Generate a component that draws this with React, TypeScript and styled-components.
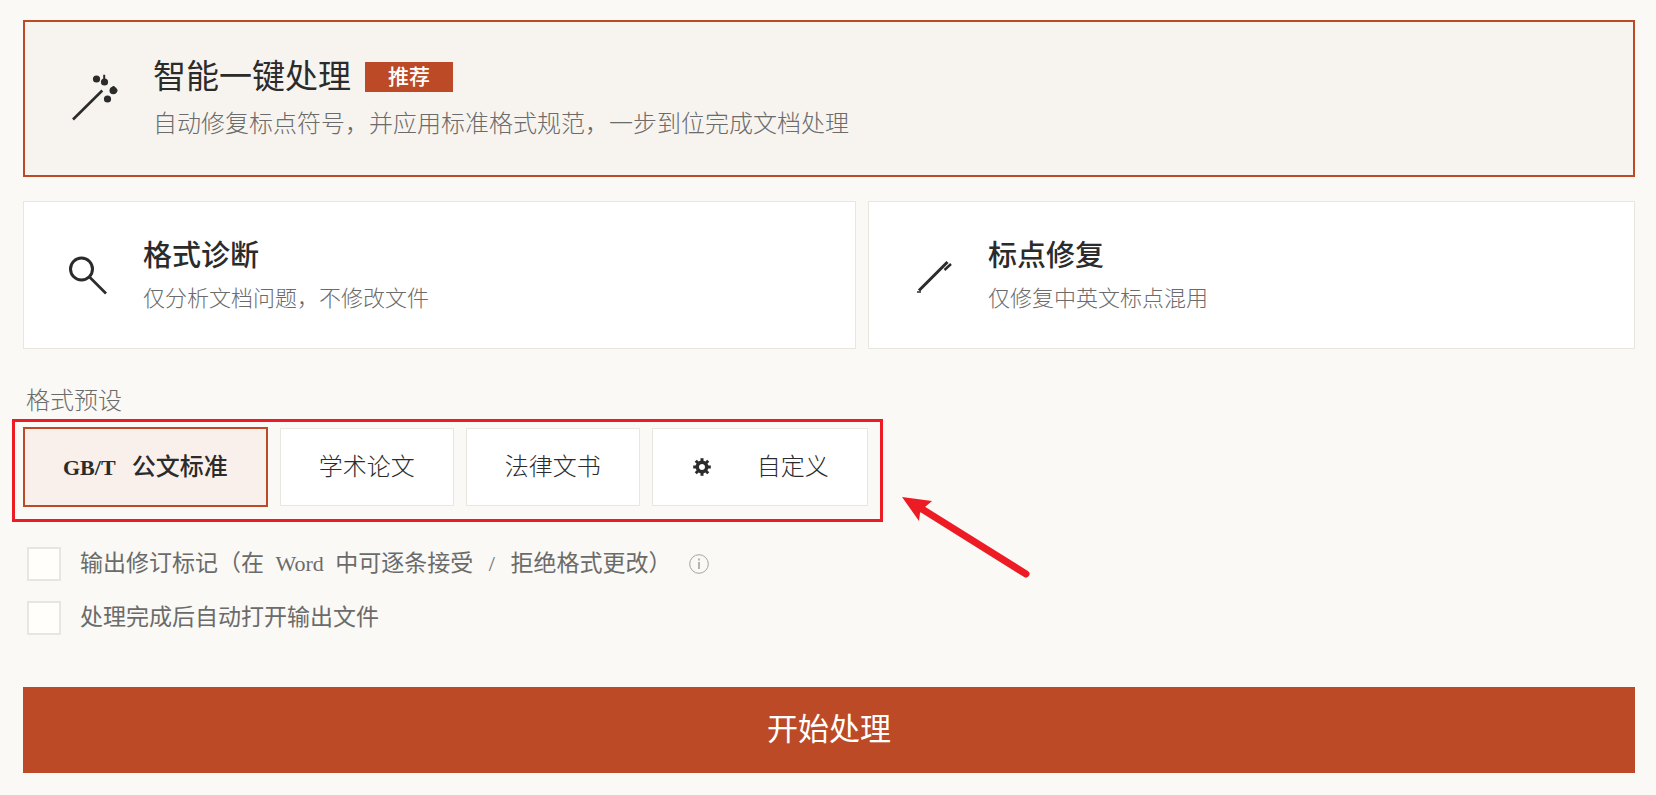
import React, { useState } from "react";
import styled, { createGlobalStyle, css } from "styled-components";

const color = {
  page: "#faf9f5",
  accent: "#bd4a26",
  accentTint: "#faf0eb",
  heroFill: "#f7f4ef",
  surface: "#ffffff",
  line: "#e8e6df",
  ink: "#2b2b2b",
  muted: "#6b6b6b",
  faint: "#a3a3a0",
  mark: "#ed1c24",
};

const GlobalStyle = createGlobalStyle`
  *, *::before, *::after { box-sizing: border-box; }
  body { margin: 0; background: ${color.page}; }
  button, input { font: inherit; color: inherit; margin: 0; }
`;

const Page = styled.main`
  padding: 20px 21px 22px 23px;
  color: ${color.ink};
  font-family: "Liberation Serif", "Noto Sans CJK SC", serif;
`;

const ModeCard = styled.button<{ $featured?: boolean }>`
  display: flex;
  align-items: center;
  gap: 27px;
  flex: 1 1 auto;
  padding: 34px 38px 33px;
  border: 1px solid ${color.line};
  background: ${color.surface};
  text-align: left;
  cursor: pointer;
  ${(p) =>
    p.$featured &&
    css`
      width: 100%;
      gap: 26px;
      padding: 33px 38px;
      border: 2px solid ${color.accent};
      background: ${color.heroFill};
    `}
`;

const ModeRow = styled.div`
  display: flex;
  gap: 12px;
  margin-top: 24px;
`;

const ModeIcon = styled.svg<{ $size: number }>`
  flex: none;
  width: ${(p) => p.$size}px;
  height: ${(p) => p.$size}px;
  fill: none;
  stroke: ${color.ink};
  stroke-width: 3;
`;

const ModeText = styled.span<{ $gap: number }>`
  display: flex;
  flex-direction: column;
  gap: ${(p) => p.$gap}px;
`;

const HeroTitle = styled.span`
  display: flex;
  align-items: center;
  gap: 14px;
  font-size: 33px;
  line-height: 44px;
`;

const HeroNote = styled.span`
  font-size: 24px;
  line-height: 36px;
  font-weight: 300;
  color: ${color.muted};
`;

const Badge = styled.span`
  padding: 0 23px;
  background: ${color.accent};
  color: #fff;
  font-size: 21px;
  line-height: 30px;
  font-weight: 500;
`;

const CardTitle = styled.span`
  font-size: 29px;
  line-height: 40px;
  font-weight: 500;
`;

const CardNote = styled.span`
  font-size: 22px;
  line-height: 32px;
  font-weight: 300;
  color: ${color.muted};
`;

const SectionLabel = styled.h2`
  margin: 36px 0 10px 3px;
  font-size: 24px;
  line-height: 32px;
  font-weight: 300;
  color: ${color.muted};
`;

const PresetGroup = styled.div`
  position: relative;
  display: flex;
  align-items: center;
  gap: 12px;
  width: fit-content;
`;

const PresetButton = styled.button<{ $active: boolean }>`
  display: flex;
  align-items: center;
  gap: 46px;
  padding: 20px 38px;
  border: 1px solid ${color.line};
  background: ${color.surface};
  font-size: 24px;
  line-height: 36px;
  font-weight: 300;
  white-space: pre;
  cursor: pointer;
  ${(p) =>
    p.$active &&
    css`
      border: 2px solid ${color.accent};
      background: ${color.accentTint};
      font-weight: 500;
    `}
`;

const Latin = styled.span<{ $bold?: boolean; $pad: string }>`
  padding: ${(p) => p.$pad};
  font-size: 22px;
  line-height: 1;
  font-weight: ${(p) => (p.$bold ? 700 : "inherit")};
`;

const GearIcon = styled.svg`
  width: 18px;
  height: 18px;
  margin-left: 2px;
`;

const HighlightFrame = styled.div`
  position: absolute;
  inset: -8px -15px -15px -11px;
  border: 3px solid ${color.mark};
  pointer-events: none;
`;

const HighlightArrow = styled.svg`
  position: absolute;
  left: 100%;
  top: 68px;
  width: 164px;
  height: 84px;
  pointer-events: none;
`;

const OptionList = styled.div`
  display: flex;
  flex-direction: column;
  gap: 20px;
  margin: 40px 0 52px 4px;
`;

const Option = styled.div`
  display: flex;
  align-items: center;
`;

const OptionLabel = styled.label`
  display: flex;
  align-items: center;
  gap: 19px;
  font-size: 23px;
  line-height: 34px;
  font-weight: 400;
  color: ${color.muted};
  cursor: pointer;
`;

const Tick = styled.input`
  appearance: none;
  flex: none;
  width: 34px;
  height: 34px;
  border: 2px solid ${color.line};
  background: #fffefb;
  &:checked {
    background: ${color.accent};
    border-color: ${color.accent};
  }
`;

const InfoButton = styled.button`
  display: flex;
  margin-left: 18px;
  padding: 0;
  border: 0;
  background: none;
`;

const InfoIcon = styled.svg`
  width: 20px;
  height: 20px;
  fill: none;
  stroke: ${color.faint};
`;

const StartButton = styled.button`
  display: block;
  width: 100%;
  padding: 20px;
  border: 0;
  background: ${color.accent};
  color: #fff;
  font-size: 31px;
  line-height: 46px;
  cursor: pointer;
`;

const presets = ["gbt", "academic", "legal", "custom"] as const;
type Preset = (typeof presets)[number];

const presetContent: Record<Preset, React.ReactNode> = {
  gbt: (
    <span>
      <Latin $bold $pad="0 11px 0 0">GB/T </Latin>公文标准
    </span>
  ),
  academic: "学术论文",
  legal: "法律文书",
  custom: (
    <>
      <GearIcon viewBox="-9 -9 18 18" aria-hidden="true">
        {[0, 45, 90, 135].map((a) => (
          <rect key={a} x="-1.5" y="-8.8" width="3" height="17.6" fill={color.ink} transform={`rotate(${a})`} />
        ))}
        <circle r="4.6" fill={color.surface} stroke={color.ink} strokeWidth="3.8" />
        <circle r="2.8" fill={color.surface} />
      </GearIcon>
      <span>自定义</span>
    </>
  ),
};

export default function App() {
  const [preset, setPreset] = useState<Preset>("gbt");

  return (
    <>
      <GlobalStyle />
      <Page>
        <ModeCard $featured type="button">
          <ModeIcon $size={64} viewBox="0 0 64 64" aria-hidden="true">
            <path d="M10 52.5L39.3 23.5" strokeWidth="2.6" />
            <path d="M41.2 7.8V15M50.5 19V24M50 23.5H54.5" strokeWidth="2" />
            <g fill={color.ink} stroke="none">
              <circle cx="33.5" cy="12" r="3.6" />
              <circle cx="41.5" cy="15" r="3.6" />
              <circle cx="50.3" cy="23.5" r="3.8" />
              <circle cx="44.5" cy="32" r="3.6" />
            </g>
          </ModeIcon>
          <ModeText $gap={7}>
            <HeroTitle>
              智能一键处理<Badge>推荐</Badge>
            </HeroTitle>
            <HeroNote>自动修复标点符号，并应用标准格式规范，一步到位完成文档处理</HeroNote>
          </ModeText>
        </ModeCard>

        <ModeRow>
          <ModeCard type="button">
            <ModeIcon $size={54} viewBox="0 0 54 54" aria-hidden="true">
              <circle cx="19.5" cy="20" r="11" />
              <path d="M27.5 28L44 44.5" strokeWidth="2.7" />
            </ModeIcon>
            <ModeText $gap={7}>
              <CardTitle>格式诊断</CardTitle>
              <CardNote>仅分析文档问题，不修改文件</CardNote>
            </ModeText>
          </ModeCard>
          <ModeCard type="button">
            <ModeIcon $size={54} viewBox="0 0 54 54" aria-hidden="true">
              <path d="M12 41.5L40.5 13" strokeWidth="3" />
              <path d="M37.5 21L44 15" strokeWidth="2.4" />
              <path d="M10 43H14" strokeWidth="1.5" />
            </ModeIcon>
            <ModeText $gap={7}>
              <CardTitle>标点修复</CardTitle>
              <CardNote>仅修复中英文标点混用</CardNote>
            </ModeText>
          </ModeCard>
        </ModeRow>

        <SectionLabel id="preset-label">格式预设</SectionLabel>
        <PresetGroup role="group" aria-labelledby="preset-label">
          {presets.map((id) => (
            <PresetButton
              key={id}
              type="button"
              $active={preset === id}
              aria-pressed={preset === id}
              onClick={() => setPreset(id)}
            >
              {presetContent[id]}
            </PresetButton>
          ))}
          <HighlightFrame />
          <HighlightArrow viewBox="0 0 164 84" aria-hidden="true">
            <path d="M54 14L158 79" stroke={color.mark} strokeWidth="7" strokeLinecap="round" />
            <path d="M34 2L64 6L57 12L52 18L51 26Z" fill={color.mark} />
          </HighlightArrow>
        </PresetGroup>

        <OptionList>
          <Option>
            <OptionLabel>
              <Tick type="checkbox" />
              <span>
                输出修订标记（在<Latin $pad="0 6px"> Word </Latin>中可逐条接受
                <Latin $pad="0 10px"> / </Latin>拒绝格式更改）
              </span>
            </OptionLabel>
            <InfoButton type="button" aria-label="说明">
              <InfoIcon viewBox="0 0 20 20" aria-hidden="true">
                <circle cx="10" cy="10" r="9.3" />
                <path d="M10 8V15M10 4.5V6.5" strokeWidth="1.6" />
              </InfoIcon>
            </InfoButton>
          </Option>
          <Option>
            <OptionLabel>
              <Tick type="checkbox" />
              <span>处理完成后自动打开输出文件</span>
            </OptionLabel>
          </Option>
        </OptionList>

        <StartButton type="button">开始处理</StartButton>
      </Page>
    </>
  );
}
